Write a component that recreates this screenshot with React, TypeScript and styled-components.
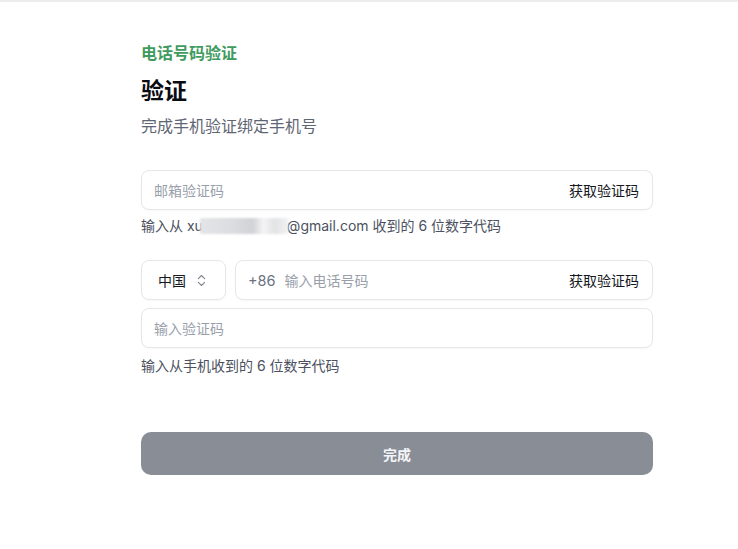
import React from "react";
import styled, { createGlobalStyle } from "styled-components";
import { ChevronsUpDown } from "lucide-react";

const Global = createGlobalStyle`
  html, body { margin: 0; padding: 0; background: #fff; }
  body {
    font-family: Inter, "Noto Sans CJK SC", "Noto Sans", sans-serif;
    -webkit-font-smoothing: antialiased;
  }
  * { box-sizing: border-box; }
`;

const Page = styled.div`
  min-height: 549px;
  border-top: 2px solid #ececec;
  padding-left: 141px;
`;

const Column = styled.div`
  width: 512px;
  padding-top: 41px;
  display: flex;
  flex-direction: column;
`;

const Eyebrow = styled.div`
  font-size: 16px;
  line-height: 20px;
  font-weight: 700;
  color: #3f9b60;
`;

const Heading = styled.h1`
  margin: 13px 0 0;
  font-size: 23px;
  line-height: 30px;
  font-weight: 700;
  color: #0b0b12;
`;

const Sub = styled.p`
  margin: 10px 0 0;
  font-size: 16px;
  line-height: 20px;
  color: #5f6673;
`;

const Field = styled.div<{ $mt?: number; $grow?: boolean }>`
  margin-top: ${(p) => p.$mt ?? 0}px;
  height: 40px;
  flex: ${(p) => (p.$grow ? "1" : "none")};
  display: flex;
  align-items: center;
  padding: 0 13px 0 12px;
  border: 1px solid #e6e7eb;
  border-radius: 8px;
  background: #fff;
  box-shadow: 0 1px 2px rgba(0, 0, 0, 0.03);
  font-size: 14px;
`;

const Placeholder = styled.span`
  flex: 1;
  color: #9a9fab;
`;

const Prefix = styled.span`
  color: #6b7280;
  font-size: 14.5px;
  margin-right: 9px;
`;

const Action = styled.span`
  color: #16181d;
  font-size: 14px;
`;

const Helper = styled.div<{ $mt: number }>`
  margin-top: ${(p) => p.$mt}px;
  font-size: 14px;
  line-height: 18px;
  color: #4b5160;
  display: flex;
  align-items: center;
  white-space: pre;
`;

const Blur = styled.span`
  display: inline-block;
  width: 88px;
  height: 16px;
  margin: 0 -1px 0 -3px;
  background: linear-gradient(
    90deg,
    #e4e5e7 0%,
    #dcdde0 35%,
    #d2d3d6 60%,
    #f4f4f5 72%,
    #e2e3e5 85%,
    #f2f2f3 100%
  );
  filter: blur(1px);
`;

const Row = styled.div`
  margin-top: 25px;
  display: flex;
  gap: 9px;
`;

const Select = styled.div`
  width: 85px;
  height: 40px;
  flex: none;
  display: flex;
  align-items: center;
  padding: 0 16px 0 16px;
  justify-content: space-between;
  border: 1px solid #e6e7eb;
  border-radius: 8px;
  box-shadow: 0 1px 2px rgba(0, 0, 0, 0.03);
  font-size: 14px;
  color: #16181d;
`;

const Submit = styled.button`
  margin-top: 57px;
  height: 43px;
  width: 100%;
  border: none;
  border-radius: 10px;
  background: #898d96;
  color: #f4f5f7;
  font-family: inherit;
  font-size: 14px;
  font-weight: 700;
`;

export default function App() {
  return (
    <>
      <Global />
      <Page>
        <Column>
          <Eyebrow>电话号码验证</Eyebrow>
          <Heading>验证</Heading>
          <Sub>完成手机验证绑定手机号</Sub>
          <Field $mt={34}>
            <Placeholder>邮箱验证码</Placeholder>
            <Action>获取验证码</Action>
          </Field>
          <Helper $mt={7}>
            输入从 xu<Blur />@gmail.com 收到的 6 位数字代码
          </Helper>
          <Row>
            <Select>
              <span>中国</span>
              <ChevronsUpDown size={15} color="#7d828c" strokeWidth={1.7} />
            </Select>
            <Field $grow>
              <Prefix>+86</Prefix>
              <Placeholder>输入电话号码</Placeholder>
              <Action>获取验证码</Action>
            </Field>
          </Row>
          <Field $mt={8}>
            <Placeholder>输入验证码</Placeholder>
          </Field>
          <Helper $mt={9}>输入从手机收到的 6 位数字代码</Helper>
          <Submit>完成</Submit>
        </Column>
      </Page>
    </>
  );
}
